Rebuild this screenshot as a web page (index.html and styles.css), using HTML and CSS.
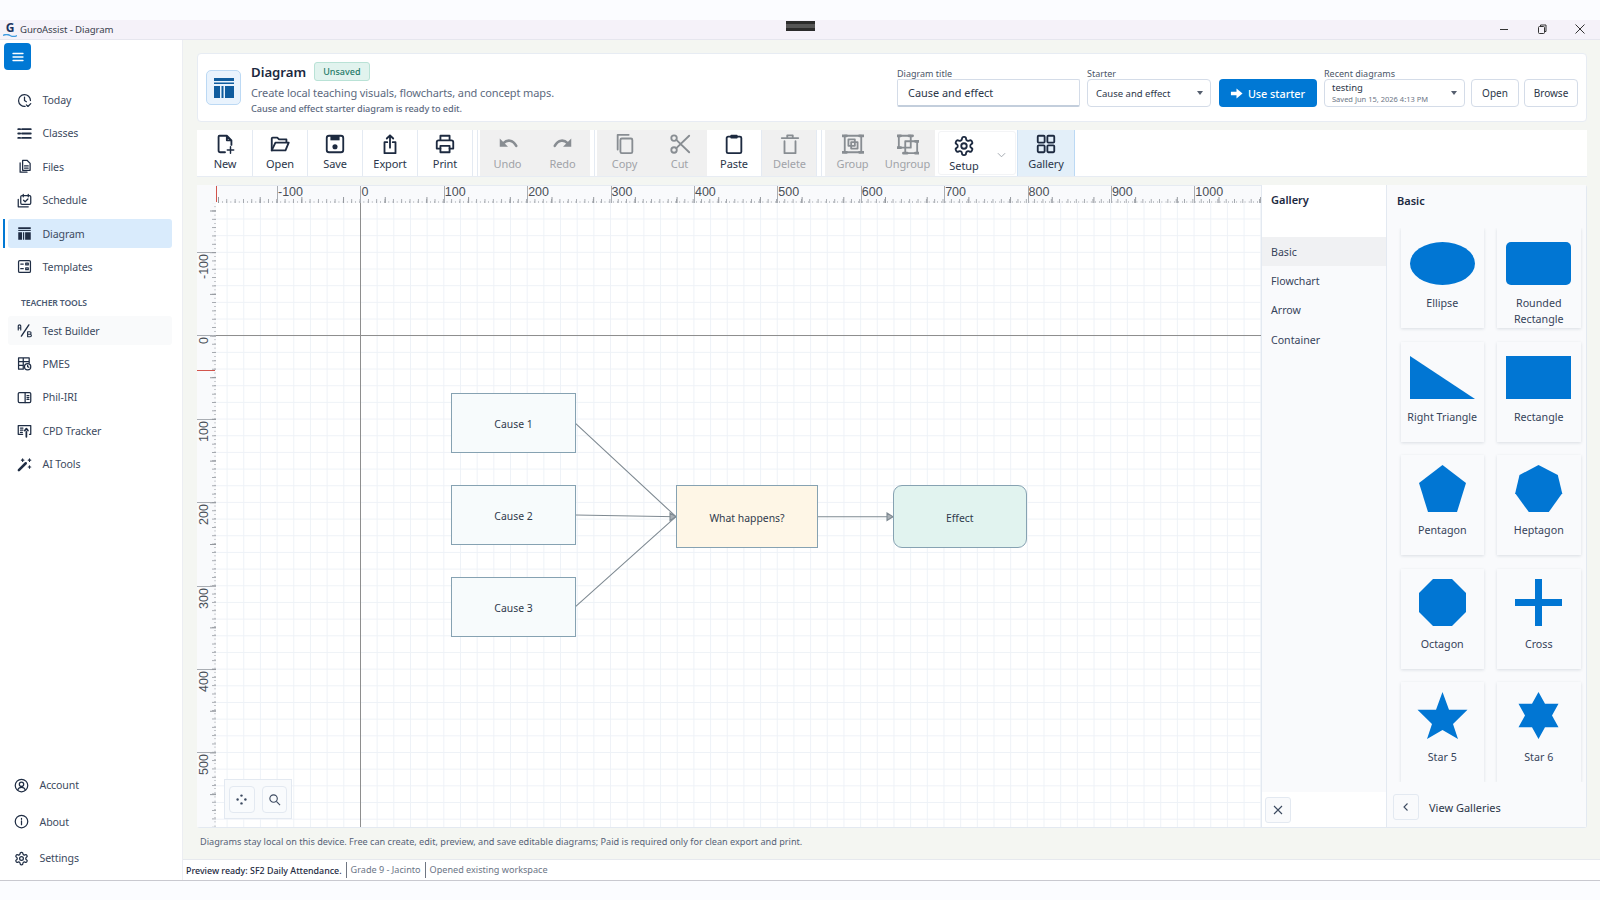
FILE: index.html
```html
<!DOCTYPE html>
<html lang="en">
<head>
    <meta charset="UTF-8">
    <title>GuroAssist - Diagram</title>
    <link rel="stylesheet" href="styles.css">
</head>
<body>
    <svg class="sprite" aria-hidden="true">
        <symbol id="i-gear" viewBox="0 0 24 24"><path d="M12.22 2h-.44a2 2 0 0 0-2 2v.18a2 2 0 0 1-1 1.73l-.43.25a2 2 0 0 1-2 0l-.15-.08a2 2 0 0 0-2.73.73l-.22.38a2 2 0 0 0 .73 2.73l.15.1a2 2 0 0 1 1 1.72v.51a2 2 0 0 1-1 1.74l-.15.09a2 2 0 0 0-.73 2.73l.22.38a2 2 0 0 0 2.73.73l.15-.08a2 2 0 0 1 2 0l.43.25a2 2 0 0 1 1 1.73V20a2 2 0 0 0 2 2h.44a2 2 0 0 0 2-2v-.18a2 2 0 0 1 1-1.73l.43-.25a2 2 0 0 1 2 0l.15.08a2 2 0 0 0 2.73-.73l.22-.39a2 2 0 0 0-.73-2.73l-.15-.08a2 2 0 0 1-1-1.74v-.5a2 2 0 0 1 1-1.74l.15-.09a2 2 0 0 0 .73-2.73l-.22-.38a2 2 0 0 0-2.73-.73l-.15.08a2 2 0 0 1-2 0l-.43-.25a2 2 0 0 1-1-1.73V4a2 2 0 0 0-2-2z"/><circle cx="12" cy="12" r="3"/></symbol>
        <symbol id="i-diagram" viewBox="0 0 24 24"><rect class="solid" x="2" y="2" width="20" height="3"/><rect class="solid" x="2" y="6.5" width="20" height="1.5"/><rect class="solid" x="2" y="10" width="6" height="12"/><rect class="solid" x="9.5" y="10" width="2" height="12"/><rect class="solid" x="13" y="10" width="9" height="12"/></symbol>
    </svg>

    <div class="top-gap"></div>
    <div class="titlebar">
        <div class="app-logo">
            <span class="app-g">G</span>
            <svg class="wave" viewBox="0 0 14 3"><path d="M0 1.500q3.500-2 7 0t7 0"/></svg>
        </div>
        <span class="app-name">GuroAssist - Diagram</span>
        <div class="win-btns">
            <svg class="win-ic" viewBox="0 0 12 12"><path d="M2 6.500h8"/></svg>
            <svg class="win-ic" viewBox="0 0 12 12"><rect x="2.500" y="3.500" width="6" height="7" rx="1"/><path d="M4.500 3.500v-1.500h5.500v6.500h-1.500"/></svg>
            <svg class="win-ic" viewBox="0 0 12 12"><path d="M1.500 1.500l9 9M10.500 1.500l-9 9"/></svg>
        </div>
        <div class="capture-pill"></div>
    </div>

    <div class="window">
        <aside class="sidebar">
            <div class="menu-btn">
                <svg class="ic menu-ic" viewBox="0 0 16 16"><path d="M3 4.500h10M3 8h10M3 11.500h10"/></svg>
            </div>
            <nav class="nav">
                <a class="nav-item"><svg class="ic" viewBox="0 0 24 24"><path d="M13 21.500A9.500 9.500 0 1 1 21.500 12"/><path d="M12 6.500V12l3 2M15 19l2.500 2.500 4.500-4.500"/></svg>Today</a>
                <a class="nav-item"><svg class="ic" viewBox="0 0 24 24"><path d="M8 5h14M8 12h14M8 19h14M2 5h3M2 12h3M2 19h3" stroke-width="3"/></svg>Classes</a>
                <a class="nav-item"><svg class="ic" viewBox="0 0 24 24"><path d="M5 6v15h11"/><path d="M9 2h7l5 5v11H9zM12 11h6M12 14.500h6"/></svg>Files</a>
                <a class="nav-item"><svg class="ic" viewBox="0 0 24 24"><path d="M2 10v12h16"/><rect x="6" y="4" width="16" height="14" rx="2"/><path d="M10 2v4M18 2v4M10.500 11.500l2.500 2.500 4.500-4.500"/></svg>Schedule</a>
                <a class="nav-item active"><svg class="ic" viewBox="0 0 24 24"><use href="#i-diagram"/></svg>Diagram</a>
                <a class="nav-item"><svg class="ic" viewBox="0 0 24 24"><rect x="2.500" y="2.500" width="19" height="19" rx="2"/><path d="M6 8h4M6 15.500h4M14 6.500h4v3h-4zM14 14h4v3h-4z"/></svg>Templates</a>
                <div class="nav-label">TEACHER TOOLS</div>
                <a class="nav-item soft"><svg class="ic" viewBox="0 0 24 24"><path d="M19 3L7 21" stroke-width="2.200"/><path d="M2 11V5a2 2 0 0 1 4 0v6M2 8h4M17 14h3.500a2 2 0 0 1 0 4H17zM17 18h4a2 2 0 0 1 0 4h-4z" stroke-width="1.800"/></svg>Test Builder</a>
                <a class="nav-item"><svg class="ic" viewBox="0 0 24 24"><path d="M10 21H2.500V3h17v8M2.500 9h17M2.500 15H10M10 3v18"/><circle cx="17" cy="17" r="5"/><path d="M17 14.500V17l2 1"/></svg>PMES</a>
                <a class="nav-item"><svg class="ic" viewBox="0 0 24 24"><rect x="2" y="4" width="20" height="16" rx="2"/><path d="M13 4v16M16 9h3M16 12h3M16 15h3"/></svg>Phil-IRI</a>
                <a class="nav-item"><svg class="ic" viewBox="0 0 24 24"><path d="M9 18H2V4h20v14h-2M5.500 8h4M5.500 11.500h4M5.500 15h3"/><path d="M15 22v-8M12.500 12l2.500-3 2.500 3" stroke-width="2.800"/></svg>CPD Tracker</a>
                <a class="nav-item"><svg class="ic" viewBox="0 0 24 24"><path d="M3 21L14 10" stroke-width="4"/><path d="M9 3v4M7 5h4M20 3v4M18 5h4M20 14v4M18 16h4" stroke-width="1.800"/></svg>AI Tools</a>
            </nav>
            <nav class="nav-bottom">
                <a class="nav-item low"><svg class="ic" viewBox="0 0 24 24"><circle cx="12" cy="12" r="10"/><circle cx="12" cy="10" r="3.500"/><path d="M6 19c1-3 3-4 6-4s5 1 6 4"/></svg>Account</a>
                <a class="nav-item low"><svg class="ic" viewBox="0 0 24 24"><circle cx="12" cy="12" r="10"/><path d="M12 11v6M12 7v1.500"/></svg>About</a>
                <a class="nav-item low"><svg class="ic" viewBox="0 0 24 24"><use href="#i-gear"/></svg>Settings</a>
            </nav>
        </aside>

        <div class="content">
            <main class="main">
                <section class="head-card">
                    <div class="head-icon"><svg class="ic" viewBox="0 0 24 24"><use href="#i-diagram"/></svg></div>
                    <div class="head-text">
                        <div class="head-title"><h1>Diagram</h1><span class="badge">Unsaved</span></div>
                        <p class="head-sub">Create local teaching visuals, flowcharts, and concept maps.</p>
                        <p class="head-note">Cause and effect starter diagram is ready to edit.</p>
                    </div>
                    <div class="head-form">
                        <div class="field title-field">
                            <label>Diagram title</label>
                            <div class="box input-box">Cause and effect</div>
                        </div>
                        <div class="field starter-field">
                            <label>Starter</label>
                            <div class="box select-box">Cause and effect<i class="caret"></i></div>
                        </div>
                        <button class="btn-primary">
                            <svg viewBox="0 0 14 14"><path d="M1 5h6V1.500L13.500 7 7 12.500V9H1z"/></svg>Use starter
                        </button>
                        <div class="field recent-field">
                            <label>Recent diagrams</label>
                            <div class="box select-box recent-box">
                                <div><div class="recent-name">testing</div><div class="recent-date">Saved Jun 15, 2026 4:13 PM</div></div>
                                <i class="caret"></i>
                            </div>
                        </div>
                        <button class="btn-plain open-btn">Open</button>
                        <button class="btn-plain browse-btn">Browse</button>
                    </div>
                </section>

                <section class="toolbar">
                    <div class="tool"><svg class="ic" viewBox="0 0 24 24"><path d="M12 21H7a2 2 0 0 1-2-2V4a1 1 0 0 1 1-1h8l5 5v5M14 3v5h5"/><path d="M18 15v7M14.500 18.500h7" stroke-width="1.600"/></svg>New</div>
                    <div class="tool"><svg class="ic" viewBox="0 0 24 24"><path d="M3 19V6a1 1 0 0 1 1-1h5l2 2h8v3"/><path d="M3 19h15l3.500-8.500H7z"/></svg>Open</div>
                    <div class="tool"><svg class="ic" viewBox="0 0 24 24"><rect x="3" y="3" width="18" height="18" rx="2.500"/><rect class="solid" x="7" y="3" width="10" height="5"/><circle class="solid" cx="12" cy="15" r="2.800"/></svg>Save</div>
                    <div class="tool"><svg class="ic" viewBox="0 0 24 24"><path d="M9 10H6v12h12V10h-3M12 16V2.500M8.500 6L12 2.500 15.500 6"/></svg>Export</div>
                    <div class="tool"><svg class="ic" viewBox="0 0 24 24"><path d="M7 8V3h10v5M7 17H3v-7a2 2 0 0 1 2-2h14a2 2 0 0 1 2 2v7h-4"/><path d="M7 14h10v7H7z"/></svg>Print</div>
                    <div class="tool-sep"></div>
                    <div class="tool off"><svg class="ic" viewBox="0 0 24 24"><path d="M7 11c4-4 10-4 14 3" stroke-width="2.800"/><path class="solid" d="M3 6v9h9z"/></svg>Undo</div>
                    <div class="tool off"><svg class="ic" viewBox="0 0 24 24"><path d="M17 11c-4-4-10-4-14 3" stroke-width="2.800"/><path class="solid" d="M21 6v9h-9z"/></svg>Redo</div>
                    <div class="tool-sep wide"></div>
                    <div class="tool off"><svg class="ic" viewBox="0 0 24 24"><rect x="7" y="6" width="13" height="16" rx="1.500"/><path d="M4 18V2h12"/></svg>Copy</div>
                    <div class="tool off"><svg class="ic" viewBox="0 0 24 24"><circle cx="5.500" cy="5.500" r="3"/><circle cx="5.500" cy="18.500" r="3"/><path d="M8 7.500L22 21M8 16.500L22 3"/></svg>Cut</div>
                    <div class="tool"><svg class="ic" viewBox="0 0 24 24"><path d="M8 4H5.500a1.500 1.500 0 0 0-1.500 1.500v15A1.500 1.500 0 0 0 5.500 22h13a1.500 1.500 0 0 0 1.500-1.500v-15A1.500 1.500 0 0 0 18.500 4H16"/><rect class="solid" x="8" y="2" width="8" height="4" rx="1"/></svg>Paste</div>
                    <div class="tool off"><svg class="ic" viewBox="0 0 24 24"><path d="M3 5.500h18M9 5V2.500h6V5M6 9v13h12V9"/></svg>Delete</div>
                    <div class="tool-sep second"></div>
                    <div class="tool off"><svg class="ic" viewBox="0 0 24 24"><rect x="3" y="3" width="18" height="18"/><rect x="7" y="7" width="7" height="7"/><rect x="10" y="10" width="7" height="7"/><path d="M1 3h4M1 21h4M19 3h4M19 21h4" stroke-width="3"/></svg>Group</div>
                    <div class="tool off"><svg class="ic" viewBox="0 0 24 24"><rect x="2" y="3" width="13" height="13"/><rect x="9" y="9" width="13" height="13"/><path d="M0 3h4M13 3h4M0 16h4M7 22h4M20 9h4M20 22h4" stroke-width="3"/></svg>Ungroup</div>
                    <div class="tool setup">
                        <div class="setup-main"><svg class="ic" viewBox="0 0 24 24"><use href="#i-gear"/></svg>Setup</div>
                        <svg class="chev" viewBox="0 0 10 6"><path d="M1 1l4 4 4-4"/></svg>
                    </div>
                    <div class="tool on"><svg class="ic" viewBox="0 0 24 24"><rect x="3" y="3" width="7.500" height="7.500" rx="1"/><rect x="13.500" y="3" width="7.500" height="7.500" rx="1"/><rect x="3" y="13.500" width="7.500" height="7.500" rx="1"/><rect x="13.500" y="13.500" width="7.500" height="7.500" rx="1"/></svg>Gallery</div>
                </section>

                <section class="workspace">
                    <div class="canvas-area">
                        <div class="corner"></div>
                        <div class="ruler-top">
                            <span>-100</span><span>0</span><span>100</span><span>200</span><span>300</span><span>400</span><span>500</span><span>600</span><span>700</span><span>800</span><span>900</span><span>1000</span>
                            <i class="mark-top"></i>
                        </div>
                        <div class="ruler-left">
                            <span><b>-100</b></span><span><b>0</b></span><span><b>100</b></span><span><b>200</b></span><span><b>300</b></span><span><b>400</b></span><span><b>500</b></span>
                            <i class="mark-left"></i>
                        </div>
                        <div class="stage">
                            <i class="axis-v"></i>
                            <i class="axis-h"></i>
                            <svg class="links" viewBox="0 0 1046 625">
                                <path d="M359.500 220.300L460 313.700M359.500 312L460 313.700M359.500 403.700L460 313.700M601 313.700H677"/>
                                <path class="head" d="M454 310l6 3.700-6 3.700zM671 310l6 3.700-6 3.700z"/>
                            </svg>
                            <div class="node cause n1">Cause 1</div>
                            <div class="node cause n2">Cause 2</div>
                            <div class="node cause n3">Cause 3</div>
                            <div class="node what">What happens?</div>
                            <div class="node effect">Effect</div>
                            <div class="zoom-tools">
                                <div class="zoom-btn"><svg viewBox="0 0 14 14"><circle cx="7" cy="2.800" r="1.300"/><circle cx="7" cy="11.200" r="1.300"/><circle cx="2.800" cy="7" r="1.300"/><circle cx="11.200" cy="7" r="1.300"/></svg></div>
                                <div class="zoom-btn"><svg class="lens" viewBox="0 0 14 14"><circle cx="6" cy="6" r="4"/><path d="M9 9l4 4"/></svg></div>
                            </div>
                        </div>
                    </div>

                    <div class="gallery-cats">
                        <h2>Gallery</h2>
                        <div class="cat-list">
                            <div class="cat sel">Basic</div>
                            <div class="cat">Flowchart</div>
                            <div class="cat">Arrow</div>
                            <div class="cat">Container</div>
                        </div>
                        <div class="cat-foot">
                            <div class="square-btn"><svg viewBox="0 0 12 12"><path d="M2 2l8 8M10 2l-8 8"/></svg></div>
                        </div>
                    </div>

                    <div class="gallery-main">
                        <h3>Basic</h3>
                        <div class="shape-grid">
                            <div class="shape"><svg viewBox="0 0 65 47"><ellipse cx="32.500" cy="25.500" rx="32.500" ry="21.500"/></svg>Ellipse</div>
                            <div class="shape"><svg viewBox="0 0 65 47"><rect y="4" width="65" height="43" rx="5"/></svg>Rounded Rectangle</div>
                            <div class="shape"><svg viewBox="0 0 65 47"><path d="M0 4v43h65z"/></svg>Right Triangle</div>
                            <div class="shape"><svg viewBox="0 0 65 47"><rect y="4" width="65" height="43"/></svg>Rectangle</div>
                            <div class="shape"><svg viewBox="0 0 65 47"><path d="M32.500 0L56 18l-9 29H18L9 18z"/></svg>Pentagon</div>
                            <div class="shape"><svg viewBox="0 0 65 47"><path d="M32.500 0l19.300 10 4.400 18.300L42.800 47H22.800L9.200 28.300 13.500 10z"/></svg>Heptagon</div>
                            <div class="shape"><svg viewBox="0 0 65 47"><path d="M23 0h19l14 14v19L42 47H23L9 33V14z"/></svg>Octagon</div>
                            <div class="shape"><svg viewBox="0 0 65 47"><path d="M29 0h7v20h20v7H36v20h-7V27H9v-7h20z"/></svg>Cross</div>
                            <div class="shape"><svg viewBox="0 0 65 47"><path d="M32.500 0L39 17.700h18.500L43 32l5 15-15.500-9L17 47l5-15L7.500 17.700H26z"/></svg>Star 5</div>
                            <div class="shape"><svg viewBox="0 0 65 47"><path d="M32.500 0L39 11.750h13.500L46 23.500l6.500 11.750H39L32.500 47 26 35.250H12.500L19 23.500 12.500 11.750H26z"/></svg>Star 6</div>
                        </div>
                        <div class="gallery-foot">
                            <div class="square-btn"><svg viewBox="0 0 12 12"><path d="M7.500 2.500L4 6l3.500 3.500"/></svg></div>
                            <span>View Galleries</span>
                        </div>
                    </div>
                </section>

                <p class="caption">Diagrams stay local on this device. Free can create, edit, preview, and save editable diagrams; Paid is required only for clean export and print.</p>
            </main>
            <footer class="statusbar">
                <span class="st-main">Preview ready: SF2 Daily Attendance.</span>
                <span class="st-item">Grade 9 - Jacinto</span>
                <span class="st-item">Opened existing workspace</span>
            </footer>
        </div>
    </div>
    <div class="bottom-gap"></div>
</body>
</html>
```

FILE: styles.css
```css
* {
    box-sizing: border-box;
}

body {
    margin: 0;
    width: 1600px;
    height: 900px;
    overflow: hidden;
    background-color: #fbfcff;
    font-family: "Noto Sans", "Open Sans", sans-serif;
    color: #25324a;
    display: flex;
    flex-direction: column;
}

.sprite {
    display: none;
}

.top-gap {
    height: 20px;
}

.bottom-gap {
    height: 20px;
    border-top: 1px solid #c9c9d0;
}

/* icons */
.ic {
    fill: none;
    stroke: currentColor;
    stroke-width: 2;
    stroke-linecap: round;
    stroke-linejoin: round;
}

.ic .solid, .solid {
    fill: currentColor;
    stroke: none;
}

/* title bar */
.titlebar {
    height: 20px;
    background-color: #f5f2f9;
    border-bottom: 1px solid #e6e6ee;
    display: flex;
    align-items: center;
    padding-left: 3px;
    position: relative;
    font-size: 9.6px;
    letter-spacing: -0.1px;
    color: #3a3f4d;
}

.app-logo {
    width: 14px;
    height: 15px;
    margin-right: 3px;
    display: flex;
    flex-direction: column;
    align-items: center;
}

.app-g {
    height: 12px;
    line-height: 12px;
    font-size: 12px;
    font-weight: 700;
    color: #1c3460;
}

.wave {
    width: 14px;
    height: 3px;
    fill: none;
    stroke: #3f9be0;
    stroke-width: 1.4;
}

.win-btns {
    margin-left: auto;
    margin-top: -2px;
    display: flex;
    padding-right: 14px;
    gap: 26px;
}

.win-ic {
    width: 12px;
    height: 12px;
    fill: none;
    stroke: #333;
    stroke-width: 1;
}

.capture-pill {
    position: absolute;
    left: 786px;
    top: 1px;
    width: 29px;
    height: 10px;
    background-color: #2b2b2b;
    border-top: 3px solid #2b2b2b;
    border-bottom: 3px solid #2b2b2b;
    background-image: linear-gradient(#555, #555);
}

/* window */
.window {
    height: 840px;
    display: flex;
}

.sidebar {
    width: 183px;
    background-color: #fff;
    border-right: 1px solid #eceef2;
    padding: 3px 10px 7.5px 4px;
    display: flex;
    flex-direction: column;
    font-size: 10.6px;
    letter-spacing: -0.12px;
}

.menu-btn {
    width: 27px;
    height: 27px;
    border-radius: 4px;
    background-color: #0078d4;
    color: #fff;
    display: flex;
    align-items: center;
    justify-content: center;
}

.menu-ic {
    width: 16px;
    height: 16px;
    stroke-width: 1.3;
}

.nav {
    margin-top: 15.5px;
}

.nav-item {
    height: 29px;
    margin-bottom: 4.4px;
    margin-left: 4px;
    padding-left: 9px;
    border-radius: 3px;
    display: flex;
    align-items: center;
    gap: 10.5px;
    color: #3c4a60;
    position: relative;
}

.nav-item .ic {
    width: 15px;
    height: 15px;
    color: #1f2d44;
    flex: none;
}

.nav-item.active {
    background-color: #d9ebfc;
}

.nav-item.active::before {
    content: "";
    position: absolute;
    left: -5px;
    top: 0;
    bottom: 0;
    width: 2px;
    background-color: #0078d4;
}

.nav-item.soft {
    background-color: #f9fafb;
}

.nav-label {
    margin: 11.1px 0 3.5px 17px;
    height: 20px;
    line-height: 20px;
    font-size: 8.6px;
    font-weight: 600;
    color: #4b5a72;
}

.nav-bottom {
    margin-top: auto;
}

.nav-bottom .nav-item {
    margin-left: 0;
    margin-bottom: 7.4px;
    padding-left: 10px;
}

.nav-bottom .nav-item:last-child {
    margin-bottom: 0;
}

.content {
    flex: 1;
    display: flex;
    flex-direction: column;
    min-width: 0;
}

.main {
    flex: 1;
    background-color: #f4f6f2;
    padding: 13px 13px 0 14px;
    display: flex;
    flex-direction: column;
    gap: 8px;
}

/* header card */
.head-card {
    height: 69px;
    background-color: #fff;
    border: 1px solid #e7ecf3;
    border-radius: 4px;
    display: flex;
    align-items: center;
    padding: 0 8px 0 8px;
}

.head-icon {
    width: 35px;
    height: 35px;
    background-color: #e9f3fd;
    border: 1px solid #bcd9f4;
    border-radius: 5px;
    display: flex;
    align-items: center;
    justify-content: center;
    color: #0f5c9e;
    margin-right: 10px;
}

.head-icon .ic {
    width: 24px;
    height: 24px;
}

.head-text {
    padding-top: 8px;
}

.head-title {
    display: flex;
    align-items: center;
    gap: 8px;
    margin-top: -6px;
}

h1 {
    margin: 0;
    font-size: 13.2px;
    font-weight: 600;
    color: #1c2940;
}

.badge {
    height: 19px;
    line-height: 17px;
    padding: 0 8px;
    font-size: 9px;
    font-weight: 500;
    background-color: #e1f3ee;
    border: 1px solid #b9e2d6;
    border-radius: 3px;
    color: #1f7a68;
}

.head-sub {
    margin: 4px 0 0;
    font-size: 11px;
    letter-spacing: -0.1px;
    color: #5d6a80;
}

.head-note {
    margin: 2px 0 0;
    font-size: 9.2px;
    letter-spacing: -0.07px;
    font-weight: 500;
    color: #5d6a80;
}

.head-form {
    margin-left: auto;
    display: flex;
    align-items: flex-end;
    align-self: flex-end;
    padding-bottom: 14px;
}

.field label {
    display: block;
    font-size: 9px;
    line-height: 11px;
    color: #4b5668;
    margin-bottom: 0;
}

.box {
    height: 28px;
    background-color: #fff;
    border: 1px solid #d4dce8;
    border-radius: 3px;
    font-size: 11px;
    display: flex;
    align-items: center;
    color: #2c3648;
}

.title-field .box {
    width: 183px;
    padding-left: 10px;
    font-size: 10.9px;
    border-bottom: 2px solid #c3cedc;
    border-radius: 2px;
}

.starter-field {
    margin-left: 7px;
}

.starter-field .box {
    width: 124px;
    padding-left: 8px;
    font-size: 9.5px;
    border-radius: 4px;
}

.caret {
    margin-left: auto;
    margin-right: 7px;
    width: 0;
    height: 0;
    border-left: 3.5px solid transparent;
    border-right: 3.5px solid transparent;
    border-top: 4px solid #555e6e;
}

.btn-primary {
    margin-left: 7.500px;
    width: 98px;
    height: 28px;
    border: none;
    border-radius: 4px;
    background-color: #0078d4;
    color: #fff;
    font-family: inherit;
    font-size: 10.8px;
    font-weight: 500;
    display: flex;
    align-items: center;
    justify-content: center;
    gap: 5px;
}

.btn-primary svg {
    width: 13px;
    height: 13px;
    fill: #fff;
}

.recent-field {
    margin-left: 7.500px;
}

.recent-box {
    width: 141px;
    padding-left: 7px;
    border-radius: 4px;
}

.recent-name {
    font-size: 9.5px;
    line-height: 12px;
}

.recent-date {
    font-size: 7.5px;
    line-height: 10px;
    color: #6c7686;
}

.btn-plain {
    height: 28px;
    background-color: #fff;
    border: 1px solid #d4dce8;
    border-radius: 4px;
    font-family: inherit;
    font-size: 10px;
    color: #2c3648;
    padding: 0;
}

.open-btn {
    margin-left: 6px;
    width: 48px;
}

.browse-btn {
    margin-left: 5px;
    width: 54px;
}

/* toolbar */
.toolbar {
    height: 47px;
    background-color: #fff;
    border-bottom: 1px solid #e7ecf3;
    padding-left: 1px;
    display: flex;
    font-size: 11px;
    letter-spacing: -0.1px;
}

.tool {
    width: 55px;
    display: flex;
    flex-direction: column;
    align-items: center;
    padding-top: 3px;
    border-right: 1px solid #e4eaf2;
    color: #2a364a;
    line-height: 15px;
    gap: 1px;
}

.tool .ic {
    width: 22px;
    height: 22px;
    color: #1d2a40;
}

.tool.off {
    background-color: #f0f0f0;
    border-right: none;
    color: #a0a3a8;
}

.tool.off .ic {
    color: #888d92;
}

.tool-sep {
    width: 8px;
    position: relative;
    border-left: 1px solid #e4eaf2;
    margin-left: -1px;
}

.tool-sep::after {
    content: "";
    position: absolute;
    left: 4px;
    top: 0;
    bottom: 0;
    width: 1px;
    background-color: #e4eaf2;
}

.tool-sep.wide {
    width: 7px;
    margin-left: 0;
    border-left: none;
}

.tool-sep.second {
    width: 9px;
}

.setup {
    width: 78px;
    margin: 1px 1px 1px 3px;
    flex-direction: row;
    border: 1px solid #f3f4f6;
    border-radius: 3px;
    padding-top: 1px;
    position: relative;
}

.setup-main {
    width: 48px;
    margin-left: 1px;
    display: flex;
    flex-direction: column;
    align-items: center;
    gap: 1px;
}

.chev {
    width: 9px;
    height: 6px;
    align-self: flex-start;
    margin: 19px 0 0 8px;
    fill: none;
    stroke: #9aa0a8;
    stroke-width: 1;
}

.tool.on {
    width: 58px;
    background-color: #e3eff9;
    border-left: 1px solid #cfe2f4;
    border-right: 1px solid #bcd9f4;
}

/* canvas + gallery */
.workspace {
    height: 643px;
    display: flex;
    border: 1px solid #e3e9f1;
    border-width: 0 1px 1px 0;
    border-radius: 3px;
}

.canvas-area {
    width: 1064px;
    display: grid;
    grid-template-columns: 19px 1fr;
    grid-template-rows: 18px 1fr;
    background-color: #f9fafc;
    overflow: hidden;
}

.ruler-top {
    padding-left: 61px;
    display: flex;
    position: relative;
    border-top: 1px solid #e6ebf2;
    background-image:
        linear-gradient(to right, #94989e 1px, transparent 1px),
        linear-gradient(to right, #a3a7ad 1px, transparent 1px),
        linear-gradient(to right, #c0c3c8 1px, transparent 1px);
    background-size: 41.7px 6px, 8.34px 4px, 4.17px 2px;
    background-position: 2px bottom;
    background-repeat: repeat-x;
}

.ruler-top span {
    flex: none;
    width: 83.4px;
    height: 17px;
    border-left: 1.5px solid #a9adb3;
    font-family: "Liberation Sans", Arial, sans-serif;
    font-size: 12.5px;
    letter-spacing: 0;
    line-height: 13px;
    color: #4a4f57;
}

.mark-top {
    position: absolute;
    left: 0;
    top: 0;
    bottom: 1px;
    width: 1px;
    background-color: #d2544c;
}

.ruler-left {
    padding-top: 49px;
    position: relative;
    overflow: hidden;
    background-image:
        linear-gradient(to bottom, #94989e 1px, transparent 1px),
        linear-gradient(to bottom, #a3a7ad 1px, transparent 1px),
        linear-gradient(to bottom, #c0c3c8 1px, transparent 1px);
    background-size: 6px 41.7px, 4px 8.34px, 2px 4.17px;
    background-position: right 7.500px;
    background-repeat: repeat-y;
}

.ruler-left span {
    display: block;
    height: 83.4px;
    border-top: 1.5px solid #a9adb3;
    width: 15px;
}

.ruler-left b {
    display: block;
    writing-mode: vertical-rl;
    transform: rotate(180deg);
    height: 40px;
    text-align: right;
    margin-top: 1px;
    font-family: "Liberation Sans", Arial, sans-serif;
    font-size: 12.5px;
    font-weight: 400;
    line-height: 15px;
    color: #4a4f57;
}

.mark-left {
    position: absolute;
    left: 0;
    right: 1px;
    top: 167px;
    height: 1px;
    background-color: #d2544c;
}

.stage {
    position: relative;
    overflow: hidden;
    background-color: #fff;
    background-image:
        linear-gradient(to right, #eef2f7 1px, transparent 1px),
        linear-gradient(to bottom, #eef2f7 1px, transparent 1px);
    background-size: 16.68px 16.68px;
    background-position: 10.6px 15.5px;
}

.axis-v {
    position: absolute;
    left: 143.5px;
    top: 0;
    bottom: 0;
    width: 1px;
    background-color: #8e8e8e;
}

.axis-h {
    position: absolute;
    top: 132px;
    left: 0;
    right: 0;
    height: 1px;
    background-color: #8e8e8e;
}

.links {
    position: absolute;
    left: 0;
    top: 0;
    width: 1046px;
    height: 625px;
    fill: none;
    stroke: #7f8a92;
    stroke-width: 1.1;
}

.links .head {
    fill: #a9b0b6;
}

.node {
    position: absolute;
    border: 1px solid #86a2b2;
    padding-top: 2px;
    display: flex;
    align-items: center;
    justify-content: center;
    font-size: 10.4px;
    color: #2f3a4c;
}

.cause {
    left: 235px;
    width: 125px;
    height: 60px;
    background-color: #f7fbfc;
}

.n1 { top: 190px; }
.n2 { top: 282px; }
.n3 { top: 373.5px; }

.what {
    left: 460px;
    top: 282px;
    width: 142px;
    height: 63px;
    background-color: #fef6e6;
}

.effect {
    left: 677px;
    top: 282px;
    width: 133.5px;
    height: 63px;
    background-color: #e1f3ef;
    border-radius: 9px;
}

.zoom-tools {
    position: absolute;
    left: 8px;
    bottom: 8px;
    width: 68px;
    height: 40px;
    padding: 6px 4px;
    display: flex;
    gap: 7px;
    background-color: #f8fafc;
    border: 1px solid #e3e9f1;
}

.zoom-btn {
    width: 27px;
    height: 27px;
    border: 1px solid #e3e9f1;
    border-radius: 4px;
    background-color: #f9fbfd;
    display: flex;
    align-items: center;
    justify-content: center;
}

.zoom-btn svg {
    width: 13px;
    height: 13px;
    fill: #3c4a60;
}

.zoom-btn .lens {
    fill: none;
    stroke: #3c4a60;
    stroke-width: 1.2;
}

.gallery-cats {
    width: 126px;
    background-color: #f9fafc;
    border-left: 1px solid #e3e9f1;
    border-right: 1px solid #e3e9f1;
    display: flex;
    flex-direction: column;
}

.gallery-cats h2 {
    margin: 0;
    height: 52px;
    padding: 7px 9px 0;
    background-color: #fff;
    font-size: 11px;
    font-weight: 600;
    color: #1c2940;
}

.cat-list {
    flex: 1;
}

.cat {
    height: 29.2px;
    line-height: 30.5px;
    padding-left: 9px;
    font-size: 10.6px;
    color: #36435a;
}

.cat.sel {
    background-color: #f0f1f3;
}

.cat-foot {
    height: 35px;
    background-color: #fff;
    padding: 5px 3px;
}

.square-btn {
    width: 26px;
    height: 26px;
    border: 1px solid #e3e9f1;
    border-radius: 3px;
    background-color: #f9fafc;
    display: flex;
    align-items: center;
    justify-content: center;
}

.square-btn svg {
    width: 12px;
    height: 12px;
    fill: none;
    stroke: #3c4a60;
    stroke-width: 1.1;
}

.gallery-main {
    flex: 1;
    background-color: #f9fafc;
    display: flex;
    flex-direction: column;
    min-height: 0;
}

.gallery-main h3 {
    margin: 0;
    height: 43px;
    padding: 8px 10px 0;
    font-size: 11px;
    font-weight: 600;
    color: #1c2940;
}

.shape-grid {
    flex: 1;
    min-height: 0;
    overflow: hidden;
    padding-left: 13.5px;
    display: grid;
    grid-template-columns: 83.5px 83.5px;
    grid-auto-rows: 100px;
    gap: 13.5px 13px;
}

.shape {
    background-color: #f9fafc;
    box-shadow: 0 1px 3px rgba(30, 50, 80, 0.14);
    padding-top: 10px;
    display: flex;
    flex-direction: column;
    align-items: center;
    text-align: center;
    font-size: 10.7px;
    line-height: 16px;
    color: #36435a;
}

.shape svg {
    width: 65px;
    height: 47px;
    fill: #0176d3;
    flex: none;
    margin-bottom: 10px;
}

.gallery-foot {
    height: 45px;
    display: flex;
    align-items: center;
    padding: 5px 0 0 6px;
    gap: 10px;
    font-size: 11px;
    color: #2c3648;
}

.caption {
    margin: -1px 0 0;
    padding: 0 3px;
    font-size: 9.15px;
    color: #556176;
}

/* status bar */
.statusbar {
    height: 21px;
    background-color: #fff;
    border-top: 1px solid #e6e9ee;
    padding-left: 3px;
    display: flex;
    align-items: center;
    font-size: 9.1px;
    color: #6a7485;
}

.st-main {
    color: #1c2940;
    font-size: 8.9px;
    font-weight: 500;
    padding-right: 4px;
}

.st-item {
    border-left: 1px solid #6f7682;
    padding: 0 4px;
    line-height: 16px;
}
```
